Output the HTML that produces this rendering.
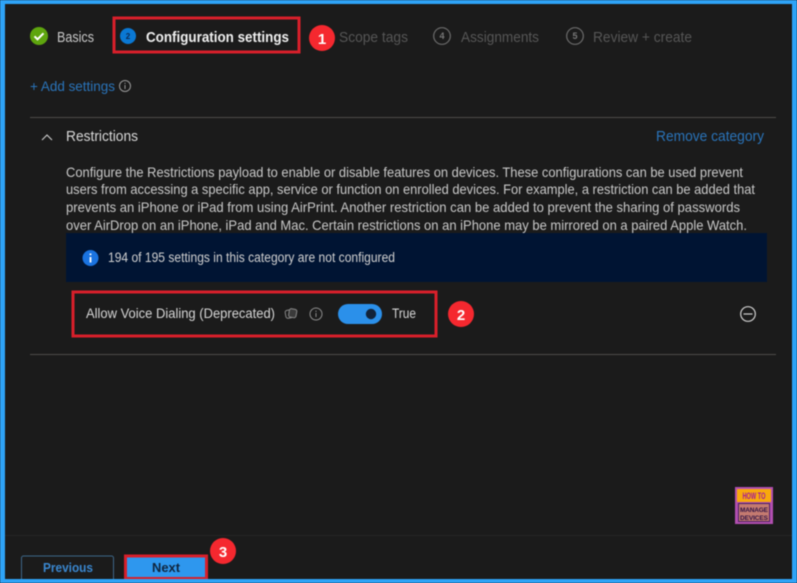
<!DOCTYPE html>
<html><head><meta charset="utf-8"><style>
html,body{margin:0;padding:0;width:797px;height:583px;overflow:hidden;background:#1b1b1b}
svg{display:block;filter:blur(.45px);font-family:"Liberation Sans",sans-serif;font-size:13.5px}
text{white-space:pre}
</style></head><body>
<svg width="797" height="583" viewBox="0 0 797 583" xmlns="http://www.w3.org/2000/svg">
<rect width="797" height="583" fill="#2ea3f7"/>
<rect x="5" y="4" width="787" height="575" fill="#1b1b1b"/>

<!-- Steps -->
<circle cx="39" cy="36" r="9" fill="#5ea50e"/>
<path d="M34.500 36.300l3 3 6-6" fill="none" stroke="#fff" stroke-width="2"/>
<text x="57" y="42" fill="#c8c8c8" font-size="15" textLength="37" lengthAdjust="spacingAndGlyphs">Basics</text>
<rect x="114" y="18" width="185" height="34" fill="none" stroke="#d81f2a" stroke-width="3"/>
<circle cx="128" cy="36" r="8" fill="#0a78d4"/>
<text x="128" y="39" fill="#0b2a55" text-anchor="middle" style="font-size:8px;font-weight:bold">2</text>
<text x="146" y="42" fill="#f0f0f0" font-weight="bold" font-size="14.500" textLength="143" lengthAdjust="spacingAndGlyphs">Configuration settings</text>
<circle cx="322" cy="38" r="13" fill="#f5282f"/>
<text x="322" y="44" fill="#fff" text-anchor="middle" style="font-size:15px;font-weight:bold">1</text>
<text x="339" y="42" fill="#565656" font-size="15" textLength="69" lengthAdjust="spacingAndGlyphs">Scope tags</text>
<circle cx="442" cy="36" r="8.300" fill="none" stroke="#6c6c6c" stroke-width="1.200"/>
<text x="442" y="39" fill="#777" text-anchor="middle" style="font-size:9px;font-weight:bold">4</text>
<text x="461" y="42" fill="#565656" font-size="15" textLength="78" lengthAdjust="spacingAndGlyphs">Assignments</text>
<circle cx="575" cy="36" r="8.300" fill="none" stroke="#6c6c6c" stroke-width="1.200"/>
<text x="575" y="39" fill="#777" text-anchor="middle" style="font-size:9px;font-weight:bold">5</text>
<text x="593" y="42" fill="#565656" font-size="15" textLength="99" lengthAdjust="spacingAndGlyphs">Review + create</text>

<!-- Add settings -->
<text x="30" y="91" fill="#2a74ba" font-size="14" textLength="85" lengthAdjust="spacingAndGlyphs">+ Add settings</text>
<circle cx="125" cy="86" r="5.500" fill="none" stroke="#9a9a9a"/>
<path d="M125 85v4M125 82.700v1.200" stroke="#9a9a9a" stroke-width="1"/>

<rect x="30" y="117" width="746" height="1" fill="#4d4b49"/>

<!-- Restrictions -->
<path d="M42 140l5-5 5 5" fill="none" stroke="#cfcfcf" stroke-width="1.100"/>
<text x="66" y="141" fill="#d8d8d8" font-size="15" textLength="72" lengthAdjust="spacingAndGlyphs">Restrictions</text>
<text x="656" y="141" fill="#2a74ba" font-size="15" textLength="108" lengthAdjust="spacingAndGlyphs">Remove category</text>

<g fill="#c8c8c8">
<text x="66" y="177" font-size="14" textLength="677" lengthAdjust="spacingAndGlyphs">Configure the Restrictions payload to enable or disable features on devices. These configurations can be used prevent</text>
<text x="66" y="194" font-size="14" textLength="689" lengthAdjust="spacingAndGlyphs">users from accessing a specific app, service or function on enrolled devices. For example, a restriction can be added that</text>
<text x="66" y="212" font-size="14" textLength="674" lengthAdjust="spacingAndGlyphs">prevents an iPhone or iPad from using AirPrint. Another restriction can be added to prevent the sharing of passwords</text>
<text x="66" y="230" font-size="14" textLength="681" lengthAdjust="spacingAndGlyphs">over AirDrop on an iPhone, iPad and Mac. Certain restrictions on an iPhone may be mirrored on a paired Apple Watch.</text>
</g>

<!-- Banner -->
<rect x="66" y="233" width="701" height="49" fill="#001433"/>
<circle cx="90.500" cy="258" r="8" fill="#1a73e0"/>
<path d="M90.500 257v5.500M90.500 253.500v1.600" stroke="#fff" stroke-width="1.800"/>
<text x="108" y="262" fill="#d0d0d0" font-size="13.500" textLength="287" lengthAdjust="spacingAndGlyphs">194 of 195 settings in this category are not configured</text>

<!-- Setting row -->
<rect x="73" y="292" width="363" height="44" fill="none" stroke="#d81f2a" stroke-width="3"/>
<text x="86" y="318" fill="#d6d6d6" font-size="14" textLength="189" lengthAdjust="spacingAndGlyphs">Allow Voice Dialing (Deprecated)</text>
<rect x="285.500" y="310" width="7.500" height="8" rx="2" fill="none" stroke="#8a8a8a" transform="rotate(-10 289 314)"/>
<rect x="289" y="309" width="7.500" height="8.500" rx="2" fill="#3a3a3a" stroke="#8a8a8a" transform="rotate(10 293 313)"/>
<circle cx="316" cy="314" r="6" fill="none" stroke="#8d8d8d"/>
<path d="M316 313v4M316 310.600v1.300" stroke="#8d8d8d"/>
<rect x="338" y="304" width="44" height="20" rx="10" fill="#2b90ea"/>
<circle cx="371" cy="314" r="5.200" fill="#12233a"/>
<text x="392" y="318" fill="#d6d6d6" font-size="14" textLength="24" lengthAdjust="spacingAndGlyphs">True</text>
<circle cx="461" cy="314" r="13" fill="#f5282f"/>
<text x="461" y="320" fill="#fff" text-anchor="middle" style="font-size:15px;font-weight:bold">2</text>
<circle cx="748" cy="314" r="7.300" fill="none" stroke="#cfcfcf" stroke-width="1.200"/>
<path d="M743.500 314h9" stroke="#cfcfcf" stroke-width="1.200"/>
<rect x="30" y="354" width="746" height="1" fill="#4d4b49"/>

<!-- Logo -->
<rect x="735" y="487" width="38" height="37" fill="#b24fb0"/>
<rect x="737" y="489" width="34" height="13" fill="#f8a90c"/>
<text x="754" y="499" fill="#a3189a" text-anchor="middle" font-weight="bold" font-size="9" textLength="23" lengthAdjust="spacingAndGlyphs">HOW TO</text>
<rect x="738.500" y="503.500" width="31" height="18" fill="#c47a70" stroke="#4a2060"/>
<text x="740" y="512" fill="#2f1445" font-weight="bold" font-size="6.500" textLength="28" lengthAdjust="spacing">MANAGE</text>
<text x="740" y="520" fill="#2f1445" font-weight="bold" font-size="6.500" textLength="28" lengthAdjust="spacing">DEVICES</text>

<!-- Footer -->
<rect x="5" y="535" width="787" height="1" fill="#252525"/>
<rect x="21.500" y="556" width="92" height="26" rx="2" fill="none" stroke="#3d6788"/>
<text x="43" y="572" fill="#3a87cf" font-weight="bold" font-size="13" textLength="50" lengthAdjust="spacingAndGlyphs">Previous</text>
<rect x="127" y="556" width="79" height="24" fill="#2e97ee"/>
<rect x="125.500" y="556" width="81" height="22.500" fill="none" stroke="#d81f2a" stroke-width="3"/>
<text x="152" y="572" fill="#10263f" font-weight="bold" font-size="13" textLength="28" lengthAdjust="spacingAndGlyphs">Next</text>
<circle cx="223" cy="551" r="13" fill="#f5282f"/>
<text x="223" y="557" fill="#fff" text-anchor="middle" style="font-size:15px;font-weight:bold">3</text>
<rect x="0" y="579" width="797" height="4" fill="#2ea3f7"/>
</svg>
</body></html>
